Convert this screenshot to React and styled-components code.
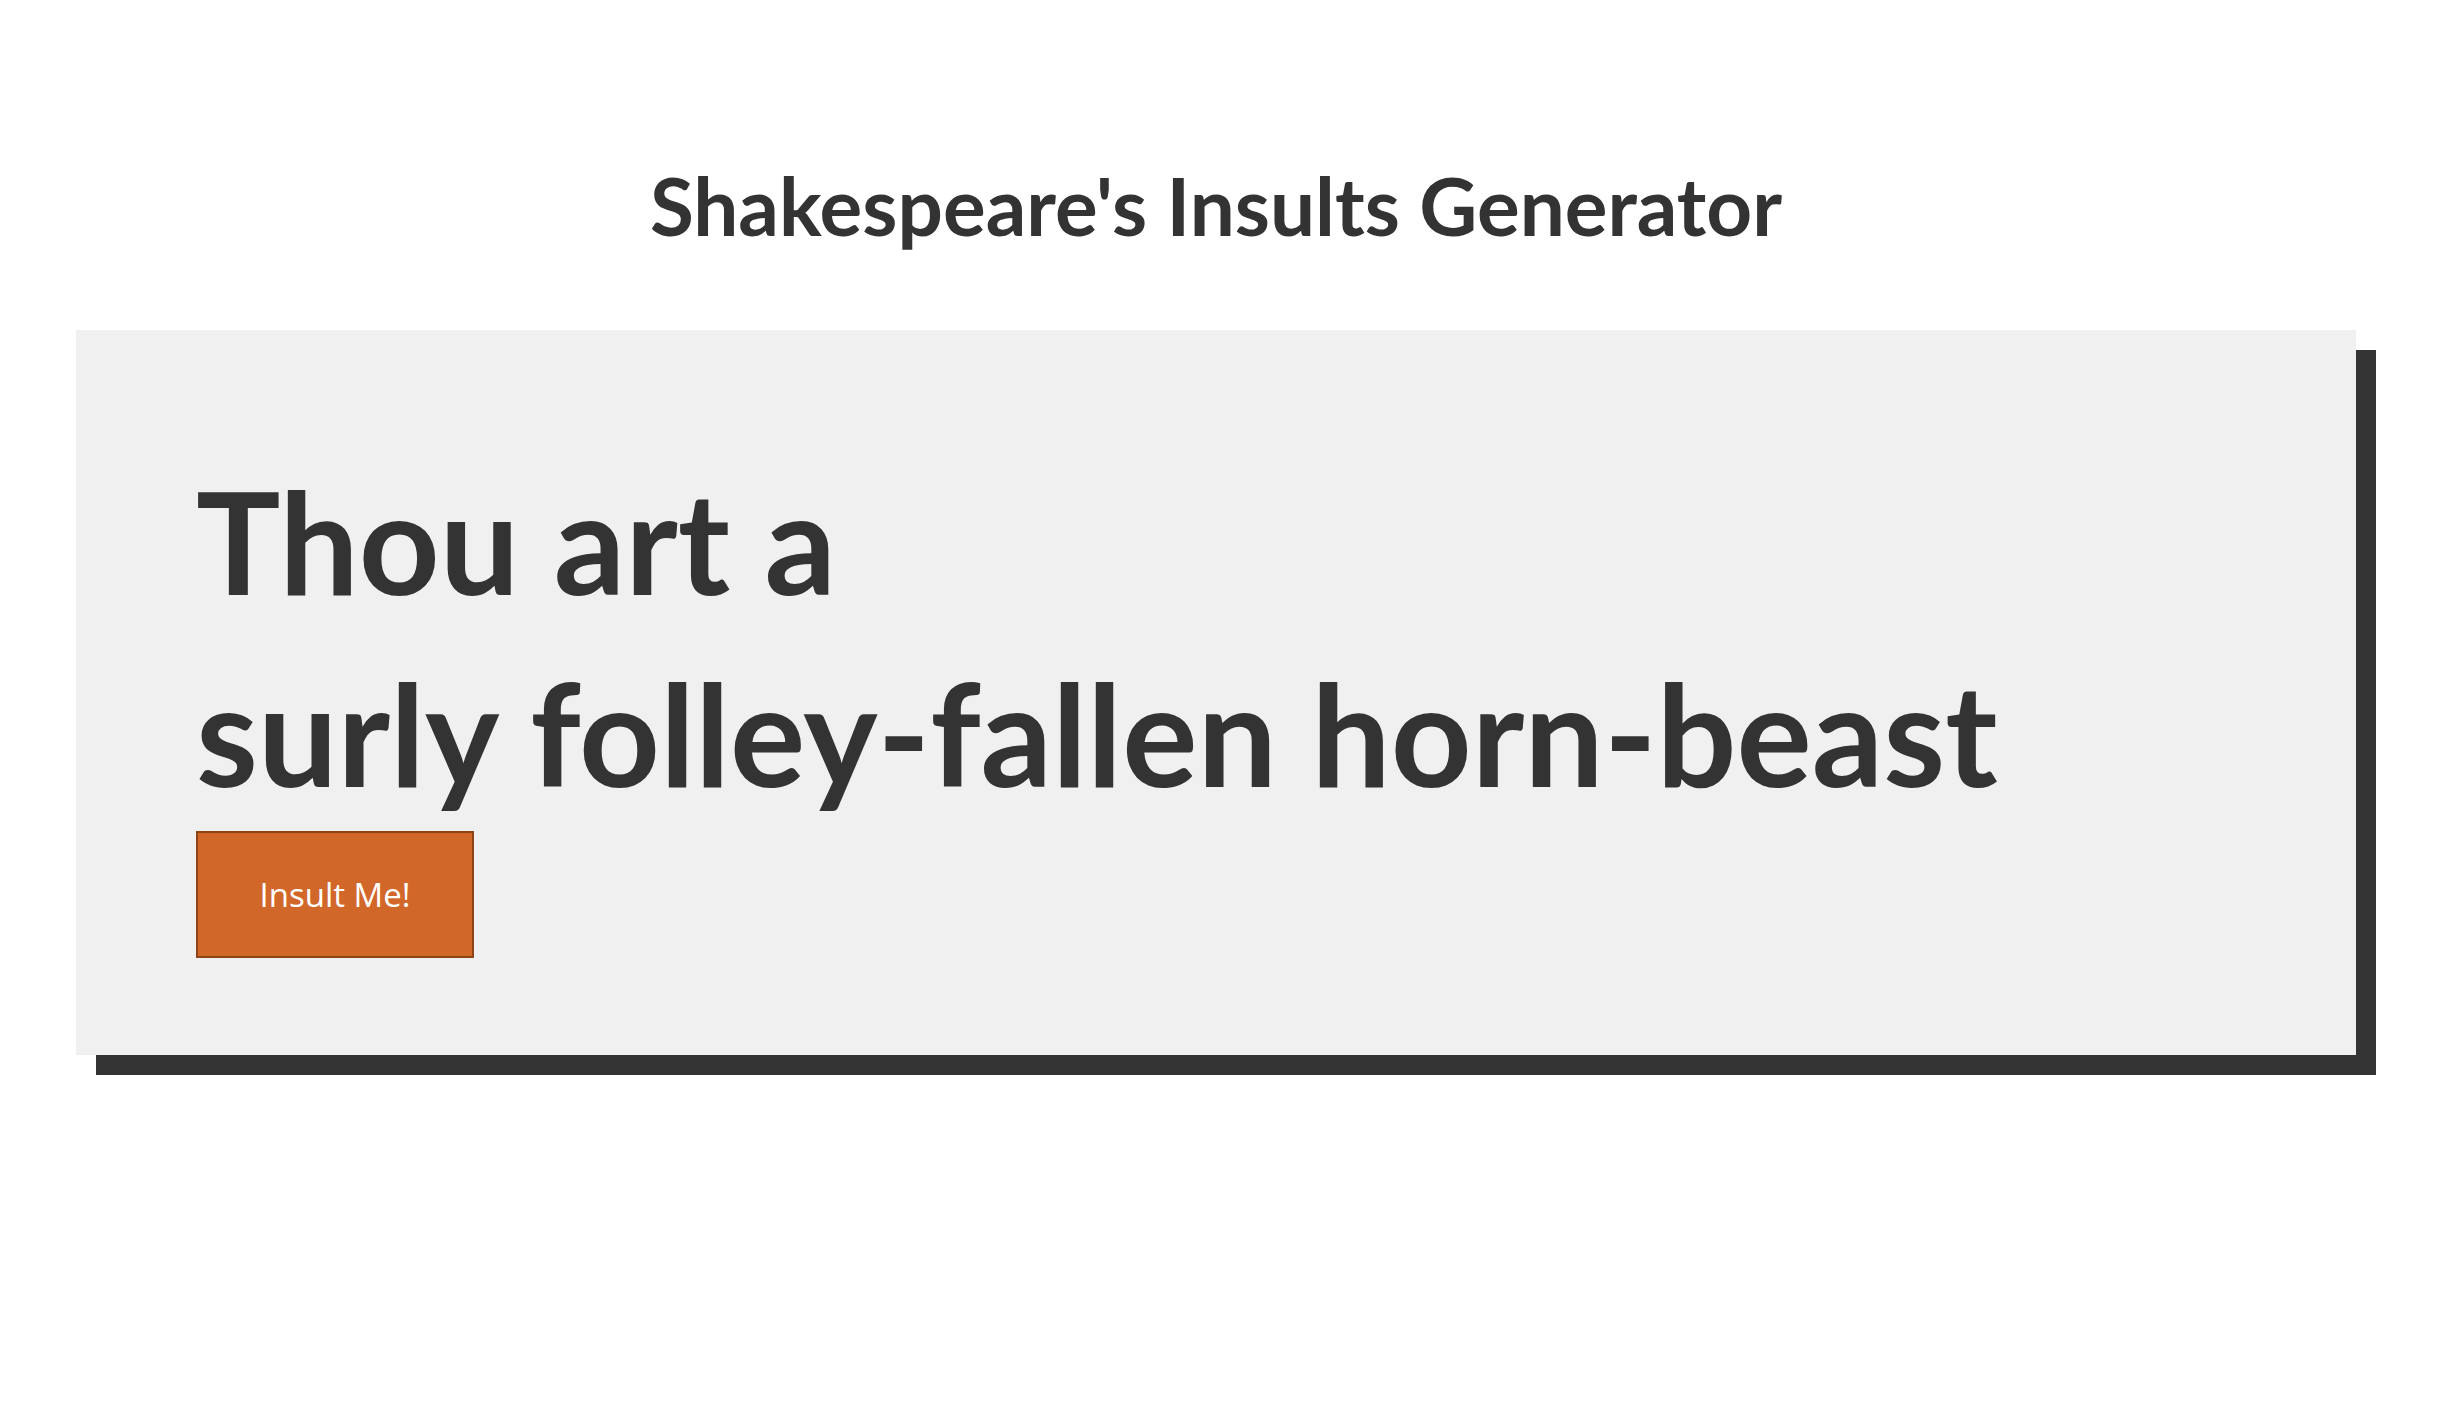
import styled, { createGlobalStyle } from 'styled-components';
import { useState } from 'react';

const GlobalStyle = createGlobalStyle`
  * { box-sizing: border-box; }
  html, body {
    margin: 0;
    min-height: 100%;
    background: #fff;
  }
  body {
    color: #333;
    font-family: Lato, "Noto Sans", sans-serif;
  }
`;

const Page = styled.main`
  display: flex;
  flex-direction: column;
  align-items: stretch;
  min-height: 100vh;
  padding: 157px 84px 0 76px;
`;

const Title = styled.h1`
  margin: 0 0 77px;
  text-align: center;
  font-size: 80px;
  font-weight: 700;
  line-height: 96px;
  color: #333;
`;

const Card = styled.section`
  background: #f0f0f0;
  box-shadow: 20px 20px 0 #333;
  padding: 115px 120px 97px;
`;

const Insult = styled.h2`
  margin: 0 0 2px;
  font-size: 141px;
  font-weight: 700;
  line-height: 192px;
  color: #333;
`;

const Button = styled.button`
  display: block;
  width: 278px;
  height: 127px;
  padding: 0;
  border: 2px solid #8f4416;
  border-radius: 0;
  background-color: #d2672a;
  color: #fff;
  font-family: "Open Sans", "Noto Sans", sans-serif;
  font-size: 33px;
  font-weight: 400;
  cursor: pointer;
`;

const adjectives = ['surly', 'rank', 'gleeking', 'froward', 'villainous'];
const middles = ['folley-fallen', 'beetle-headed', 'clay-brained', 'onion-eyed'];
const nouns = ['horn-beast', 'canker-blossom', 'hedge-pig', 'lewdster'];

const pick = (list) => list[Math.floor(Math.random() * list.length)];

const App = () => {
  const [insult, setInsult] = useState('surly folley-fallen horn-beast');

  const insultMe = () => {
    setInsult(`${pick(adjectives)} ${pick(middles)} ${pick(nouns)}`);
  };

  return (
    <>
      <GlobalStyle />
      <Page>
        <Title>Shakespeare's Insults Generator</Title>
        <Card>
          <Insult>
            Thou art a
            <br />
            {insult}
          </Insult>
          <Button onClick={insultMe}>Insult Me!</Button>
        </Card>
      </Page>
    </>
  );
};

export default App;
